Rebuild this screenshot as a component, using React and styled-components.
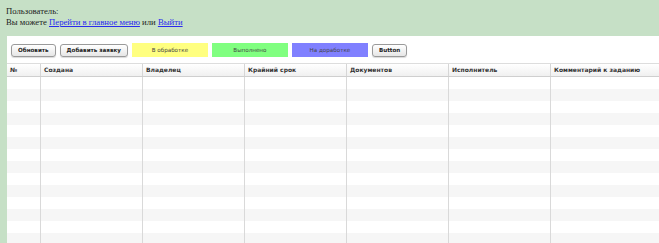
import React from "react";
import styled, { createGlobalStyle } from "styled-components";

const GlobalStyle = createGlobalStyle`
  html, body {
    margin: 0;
    padding: 0;
    background: #c6e0c6;
    overflow: hidden;
  }
`;

const columns = [
  { title: "№", width: 34 },
  { title: "Создана", width: 102 },
  { title: "Владелец", width: 102 },
  { title: "Крайний срок", width: 102 },
  { title: "Документов", width: 102 },
  { title: "Исполнитель", width: 102 },
  { title: "Комментарий к заданию", width: 120 },
];

const statuses = [
  { label: "В обработке", color: "#ffff80" },
  { label: "Выполнено", color: "#80ff80" },
  { label: "На доработке", color: "#8080ff" },
];

const rows = Array.from({ length: 14 });

const App = () => {
  return (
    <Page>
      <GlobalStyle />
      <UserInfo>
        Пользователь:
        <br />
        Вы можете <a href="#">Перейти в главное меню</a> или <a href="#">Выйти</a>
      </UserInfo>
      <Panel>
        <Toolbar>
          <Button>Обновить</Button>
          <Button>Добавить заявку</Button>
          {statuses.map((s) => (
            <Status key={s.label} $color={s.color}>{s.label}</Status>
          ))}
          <Button>Button</Button>
        </Toolbar>
        <Grid>
          <HeadRow>
            {columns.map((c) => (
              <HeadCell key={c.title} style={{ width: c.width }}>{c.title}</HeadCell>
            ))}
          </HeadRow>
          {rows.map((_, i) => (
            <Row key={i} $alt={i % 2 === 1}>
              {columns.map((c) => (
                <Cell key={c.title} style={{ width: c.width }} />
              ))}
            </Row>
          ))}
        </Grid>
      </Panel>
    </Page>
  );
};

const Page = styled.div`
  padding: 6px 0 0 7px;
  height: 243px;
  box-sizing: border-box;
`;

const UserInfo = styled.div`
  font-family: "Liberation Serif", serif;
  font-size: 8.7px;
  line-height: 11px;
  color: #222;
  margin-left: -1px;
  a {
    color: #2a2aee;
  }
`;

const Panel = styled.div`
  margin-top: 8px;
  background: #fff;
  height: 300px;
`;

const Toolbar = styled.div`
  display: flex;
  align-items: center;
  gap: 4px;
  padding: 7px 4px 6px;
`;

const Button = styled.button`
  height: 13px;
  padding: 0 6px;
  border: 1px solid #9a9a9a;
  border-radius: 3px;
  background: linear-gradient(#ffffff, #e6e6e6);
  font-family: "DejaVu Sans", Verdana, sans-serif;
  font-size: 5.6px;
  font-weight: bold;
  color: #222;
  line-height: 11px;
  box-shadow: 0 1px 1px rgba(0, 0, 0, 0.15);
`;

const Status = styled.div`
  width: 76px;
  height: 14px;
  background: ${(p) => p.$color};
  font-family: "DejaVu Sans", Verdana, sans-serif;
  font-size: 5.6px;
  line-height: 14px;
  text-align: center;
  color: #444;
`;

const Grid = styled.div`
  display: flex;
  flex-direction: column;
  border-top: 1px solid #ddd;
`;

const HeadRow = styled.div`
  display: flex;
  height: 12px;
  background: linear-gradient(#ffffff, #f0f0f0);
  border-bottom: 1px solid #cfcfcf;
`;

const HeadCell = styled.div`
  flex: none;
  box-sizing: border-box;
  padding-left: 3px;
  border-right: 1px solid #d6d6d6;
  font-family: "DejaVu Sans", Verdana, sans-serif;
  font-size: 6px;
  font-weight: bold;
  color: #333;
  line-height: 12px;
  white-space: nowrap;
`;

const Row = styled.div`
  display: flex;
  height: 12px;
  background: ${(p) => (p.$alt ? "#f6f6f6" : "#ffffff")};
`;

const Cell = styled.div`
  flex: none;
  box-sizing: border-box;
  border-right: 1px solid #d9d9d9;
`;

export default App;
